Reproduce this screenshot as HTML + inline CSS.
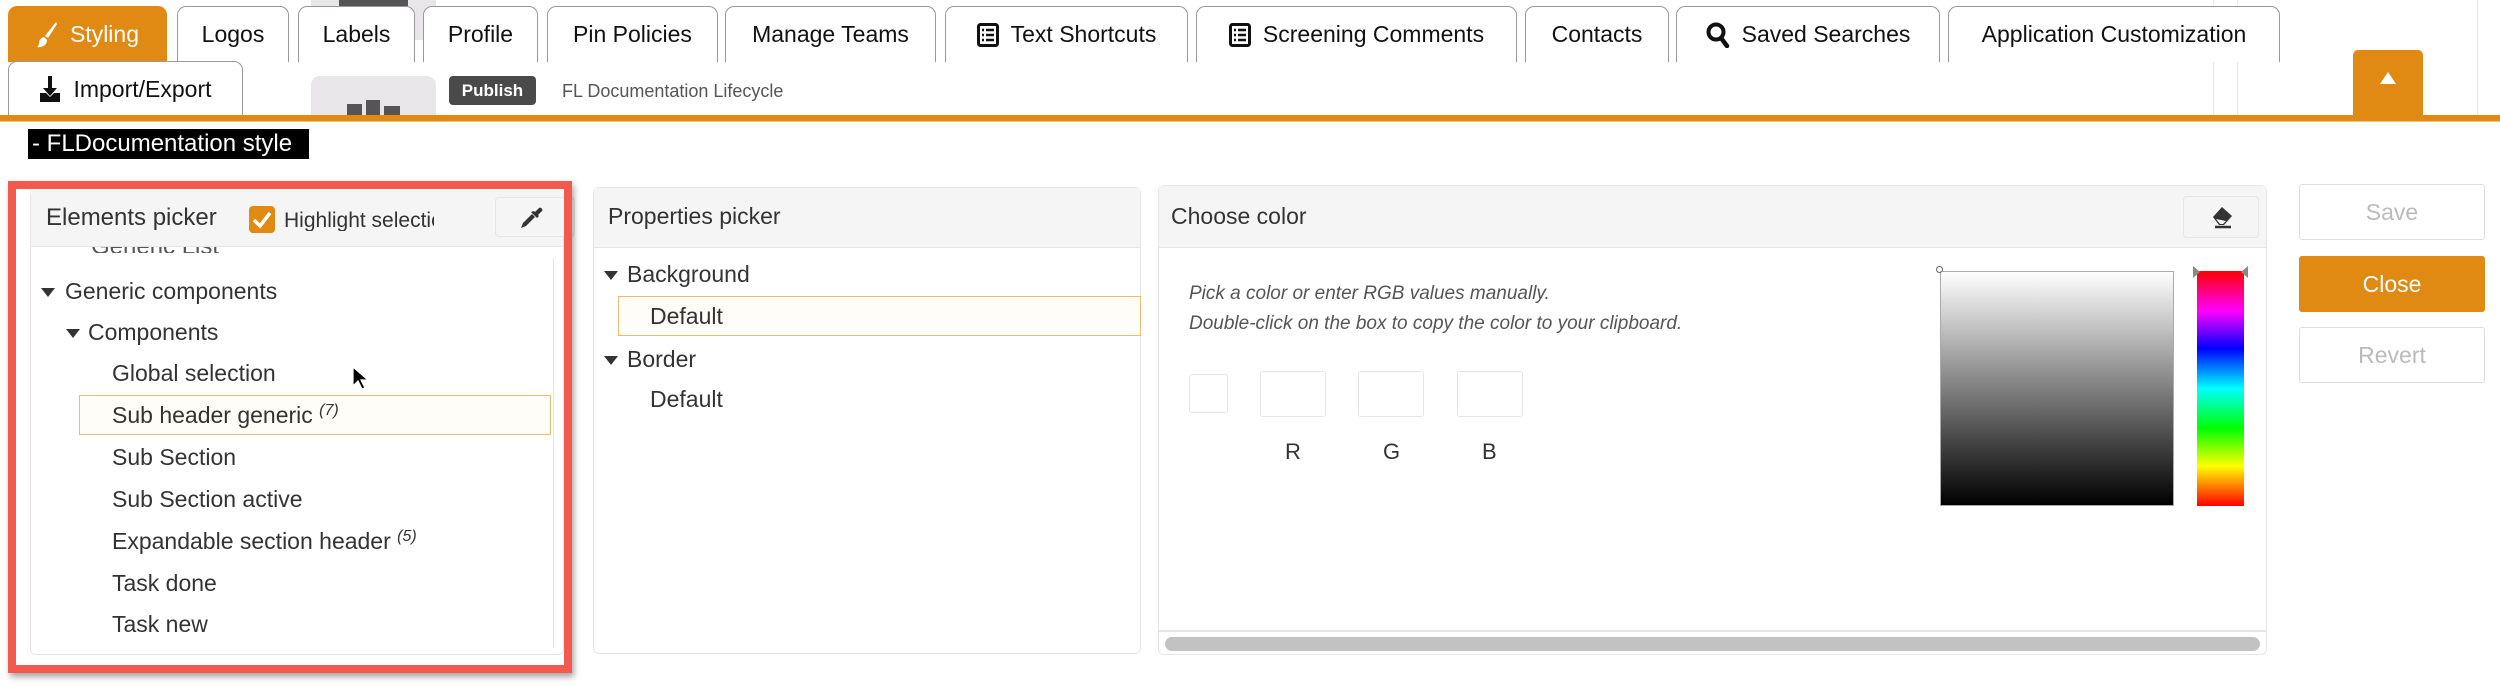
<!DOCTYPE html>
<html><head><meta charset="utf-8"><style>
*{box-sizing:border-box;margin:0;padding:0}
body{width:2500px;height:685px;background:#fff;position:relative;overflow:hidden;font-family:"Liberation Sans",sans-serif;color:#222}
.a{position:absolute}
.tab{position:absolute;top:6px;height:56px;border:1.5px solid #999;border-bottom:none;border-radius:9px 9px 0 0;background:#fff;font-size:23px;display:flex;align-items:center;justify-content:center;gap:12px;color:#111}
.t{position:absolute;font-size:23px;color:#333;white-space:nowrap;line-height:1}
.panel{position:absolute;border:1.5px solid #e6e6e6;border-radius:6px;background:#fff}
.hdr{position:absolute;left:0;right:0;top:0;height:62px;background:#f5f5f5;border-bottom:1.5px solid #e6e6e6}
.tri{position:absolute;width:0;height:0;border-left:7px solid transparent;border-right:7px solid transparent;border-top:9px solid #333}
.btn{position:absolute;left:2299px;width:186px;height:56px;border:1.5px solid #ddd;border-radius:3px;font-size:23px;color:#bbb;display:flex;align-items:center;justify-content:center}
.box{position:absolute;border:1.5px solid #e6e6e6;border-radius:3px}
</style></head><body>
<div class="a" style="left:311px;top:0;width:125px;height:40px;background:#e8e6e8"></div>
<div class="a" style="left:339px;top:0;width:69px;height:6px;background:#555"></div>
<div class="a" style="left:2213px;top:0;width:1px;height:115px;background:#e6e6e6"></div>
<div class="a" style="left:2237px;top:0;width:1px;height:115px;background:#e6e6e6"></div>
<div class="a" style="left:2477px;top:0;width:1px;height:115px;background:#e6e6e6"></div>

<div class="tab" style="left:8px;width:159px;background:#e08a14;border-color:#e08a14;color:#fff">
<svg width="22" height="28" viewBox="0 0 22 28"><path d="M20 1 L9 15 L12 17 L21 3Z" fill="#fff"/><path d="M8 16 C4 17 3 20 3 22 C3 25 1 26 1 26 C6 27 11 24 11 19Z" fill="#fff"/></svg>Styling</div>
<div class="tab" style="left:177px;width:112px">Logos</div>
<div class="tab" style="left:298px;width:117px">Labels</div>
<div class="tab" style="left:423px;width:115px">Profile</div>
<div class="tab" style="left:547px;width:171px">Pin Policies</div>
<div class="tab" style="left:725px;width:211px">Manage Teams</div>
<div class="tab" style="left:945px;width:243px"><svg width="22" height="24" viewBox="0 0 22 24"><rect x="1.5" y="1.5" width="19" height="21" rx="2" fill="none" stroke="#111" stroke-width="3"/><path d="M5 7h2M9 7h8M5 12h2M9 12h8M5 17h2M9 17h8" stroke="#111" stroke-width="2.5"/></svg>Text Shortcuts</div>
<div class="tab" style="left:1196px;width:321px"><svg width="22" height="24" viewBox="0 0 22 24"><rect x="1.5" y="1.5" width="19" height="21" rx="2" fill="none" stroke="#111" stroke-width="3"/><path d="M5 7h2M9 7h8M5 12h2M9 12h8M5 17h2M9 17h8" stroke="#111" stroke-width="2.5"/></svg>Screening Comments</div>
<div class="tab" style="left:1525px;width:144px">Contacts</div>
<div class="tab" style="left:1676px;width:264px"><svg width="24" height="26" viewBox="0 0 24 26"><circle cx="10" cy="10" r="7.5" fill="none" stroke="#111" stroke-width="4"/><path d="M15 16l6 8" stroke="#111" stroke-width="4.5" stroke-linecap="round"/></svg>Saved Searches</div>
<div class="tab" style="left:1948px;width:332px">Application Customization</div>
<div class="tab" style="left:8px;top:61px;width:235px;height:55px"><svg width="22" height="28" viewBox="0 0 22 28"><path d="M9 1h4v12h5l-7 8-7-8h5z" fill="#111"/><path d="M1 18v9h20v-9h-6l-4 4-4-4z" fill="#111"/></svg>Import/Export</div>

<div class="a" style="left:311px;top:76px;width:125px;height:45px;background:#e8e6e8;border-radius:9px 9px 0 0"></div>
<div class="a" style="left:347px;top:104px;width:15px;height:11px;background:#555"></div>
<div class="a" style="left:366px;top:100px;width:14px;height:15px;background:#555"></div>
<div class="a" style="left:384px;top:106px;width:16px;height:9px;background:#555"></div>
<div class="a" style="left:449px;top:76px;width:87px;height:29px;background:#4a4a4a;border-radius:4px;color:#fff;font-size:17px;font-weight:bold;display:flex;align-items:center;justify-content:center">Publish</div>
<div class="t" style="left:562px;top:82px;font-size:18px;color:#555">FL Documentation Lifecycle</div>
<div class="a" style="left:2353px;top:50px;width:70px;height:66px;background:#e08a14;border-radius:5px 5px 0 0"></div>
<div class="a" style="left:2380px;top:72px;width:0;height:0;border-left:8px solid transparent;border-right:8px solid transparent;border-bottom:12px solid #fff"></div>
<div class="a" style="left:0;top:115px;width:2500px;height:6px;background:#e08a14"></div>
<div class="a" style="left:0;top:121px;width:2500px;height:1px;background:#f3c27a"></div>

<div class="a" style="left:28px;top:129px;width:281px;height:30px;background:#000;color:#fff;font-size:24px;line-height:30px;padding-left:4px;white-space:nowrap">- FLDocumentation style</div>

<!-- Elements picker -->
<div class="panel" style="left:30px;top:190px;width:534px;height:465px;border-top:none">
<div class="hdr" style="height:57px"></div>
<div class="t" style="left:15px;top:16px;font-size:24px">Elements picker</div>
<div class="a" style="left:218px;top:16px;width:26px;height:27px;background:#e08a14;border-radius:4px"><svg width="26" height="27" viewBox="0 0 26 27"><path d="M5 14l6 6 10-13" fill="none" stroke="#fff" stroke-width="3.5"/></svg></div>
<div class="t" style="left:253px;top:20px;font-size:21px;width:150px;overflow:hidden">Highlight selection</div>
<div class="a" style="left:464px;top:7px;width:80px;height:40px;border:1.5px solid #e6e6e6;border-radius:4px;background:#f5f5f5"><svg class="a" style="left:22px;top:7px" width="26" height="26" viewBox="0 0 26 26"><path d="M3 23l2-5 9-9 3 3-9 9z" fill="#333"/><path d="M13 7l6 6 2-2-1-1 4-4c1.5-1.5-1.5-4.5-3-3l-4 4-1-1z" fill="#333"/></svg></div>
<div class="a" style="left:522px;top:68px;width:1px;height:390px;background:#e6e6e6"></div>
<div class="a" style="left:60px;top:57px;width:160px;height:6px;overflow:hidden"><div style="margin-top:-14px;font-size:24px;color:#555">Generic List</div></div>
</div>
<div class="a" style="left:8px;top:181px;width:564px;height:492px;border:8px solid #f25a4e;box-shadow:2px 4px 6px rgba(0,0,0,.35)"></div>
<div class="tri" style="left:41px;top:288px"></div>
<div class="t" style="left:65px;top:280px">Generic components</div>
<div class="tri" style="left:66px;top:329px"></div>
<div class="t" style="left:88px;top:321px">Components</div>
<div class="t" style="left:112px;top:362px">Global selection</div>
<div class="a" style="left:79px;top:395px;width:472px;height:40px;border:1.5px solid #f0b870;background:#fffdf7"></div>
<div class="t" style="left:112px;top:403px">Sub header generic <i style="font-size:16px;vertical-align:8px">(7)</i></div>
<div class="t" style="left:112px;top:446px">Sub Section</div>
<div class="t" style="left:112px;top:488px">Sub Section active</div>
<div class="t" style="left:112px;top:529px">Expandable section header <i style="font-size:16px;vertical-align:8px">(5)</i></div>
<div class="t" style="left:112px;top:572px">Task done</div>
<div class="t" style="left:112px;top:613px">Task new</div>
<svg class="a" style="left:352px;top:366px" width="18" height="26" viewBox="0 0 18 26"><path d="M1 1v19l5-5 4 8 3-1-4-8h7z" fill="#000" stroke="#fff" stroke-width="1.2"/></svg>

<!-- Properties -->
<div class="panel" style="left:593px;top:187px;width:548px;height:467px">
<div class="hdr" style="height:60px"></div>
<div class="t" style="left:14px;top:17px;font-size:23px">Properties picker</div>
</div>
<div class="tri" style="left:604px;top:271px"></div>
<div class="t" style="left:627px;top:263px">Background</div>
<div class="a" style="left:618px;top:296px;width:523px;height:40px;border:1.5px solid #f0b870;background:#fffdf7"></div>
<div class="t" style="left:650px;top:305px">Default</div>
<div class="tri" style="left:604px;top:356px"></div>
<div class="t" style="left:627px;top:348px">Border</div>
<div class="t" style="left:650px;top:388px">Default</div>

<!-- Choose color -->
<div class="panel" style="left:1158px;top:185px;width:1109px;height:470px">
<div class="hdr"></div>
<div class="t" style="left:12px;top:19px;font-size:23px">Choose color</div>
<div class="a" style="left:1024px;top:10px;width:76px;height:42px;border:1.5px solid #e6e6e6;border-radius:4px;background:#f5f5f5"><svg class="a" style="left:25px;top:8px" width="26" height="24" viewBox="0 0 26 24"><path d="M13 2l-9 10 6 8h5l8-9z" fill="#333"/><path d="M7 14l4 5h3l3-3z" fill="#f5f5f5"/><path d="M6 22h16" stroke="#333" stroke-width="2.5"/></svg></div>
<div class="a" style="left:0;right:0;top:444px;height:1.5px;background:#e6e6e6"></div>
<div class="a" style="left:6px;right:6px;top:451px;height:14px;background:#c2c2c2;border-radius:7px"></div>
</div>
<div class="t" style="left:1189px;top:284px;font-size:19px;font-style:italic;color:#555">Pick a color or enter RGB values manually.</div>
<div class="t" style="left:1189px;top:314px;font-size:19px;font-style:italic;color:#555">Double-click on the box to copy the color to your clipboard.</div>
<div class="box" style="left:1189px;top:374px;width:39px;height:39px"></div>
<div class="box" style="left:1260px;top:371px;width:66px;height:46px"></div>
<div class="box" style="left:1358px;top:371px;width:66px;height:46px"></div>
<div class="box" style="left:1457px;top:371px;width:66px;height:46px"></div>
<div class="t" style="left:1285px;top:441px;font-size:22px">R</div>
<div class="t" style="left:1383px;top:441px;font-size:22px">G</div>
<div class="t" style="left:1482px;top:441px;font-size:22px">B</div>
<div class="a" style="left:1940px;top:271px;width:234px;height:235px;border:1.5px solid #aaa;background:linear-gradient(#fff,#000)"></div>
<div class="a" style="left:1936px;top:266px;width:7px;height:7px;border:1px solid #666;border-radius:50%;background:#fff"></div>
<div class="a" style="left:2197px;top:271px;width:47px;height:235px;background:linear-gradient(#f00,#f0f 17%,#00f 33%,#0ff 50%,#0f0 67%,#ff0 83%,#f00)"></div>
<div class="a" style="left:2193px;top:266px;width:0;height:0;border-top:6px solid transparent;border-bottom:6px solid transparent;border-left:7px solid #888"></div>
<div class="a" style="left:2241px;top:266px;width:0;height:0;border-top:6px solid transparent;border-bottom:6px solid transparent;border-right:7px solid #888"></div>

<div class="btn" style="top:184px">Save</div>
<div class="btn" style="top:256px;background:#e08a14;border-color:#e08a14;color:#fff">Close</div>
<div class="btn" style="top:327px">Revert</div>
</body></html>
